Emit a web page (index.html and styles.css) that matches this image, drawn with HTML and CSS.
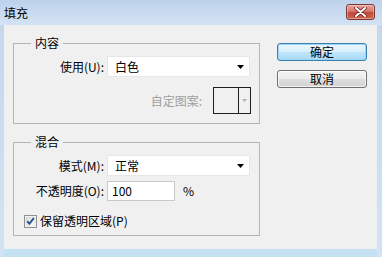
FILE: index.html
```html
<!DOCTYPE html>
<html lang="zh-CN">
<head>
<meta charset="utf-8">
<title>填充</title>
<link rel="stylesheet" href="styles.css">
</head>
<body>
<div class="window">
  <div class="titlebar">
    <span class="title">填充</span>
    <div class="close">
      <svg width="13" height="10" viewBox="0 0 13 10">
        <path d="M2 1 L11 9 M11 1 L2 9" stroke="#6b2020" stroke-width="3.6" stroke-linecap="round"/>
        <path d="M2 1 L11 9 M11 1 L2 9" stroke="#ffffff" stroke-width="2" stroke-linecap="round"/>
      </svg>
    </div>
  </div>
  <div class="client">
    <div class="main">
      <fieldset class="group g1">
        <legend>内容</legend>
        <div class="row">
          <span class="lbl">使用(U):</span>
          <div class="select"><span>白色</span>
            <svg class="arrow" width="7" height="4" viewBox="0 0 7 4"><path d="M0 0 H7 L3.5 4 Z" fill="#000"/></svg>
          </div>
        </div>
        <div class="row pattern-row">
          <span class="lbl-plain disabled">自定图案:</span>
          <div class="swatch">
            <div class="swatch-main"></div>
            <div class="swatch-arrow">
              <svg width="5" height="3" viewBox="0 0 5 3"><path d="M0 0 H5 L2.5 3 Z" fill="#b0b0b0"/></svg>
            </div>
          </div>
        </div>
      </fieldset>
      <fieldset class="group g2">
        <legend>混合</legend>
        <div class="row">
          <span class="lbl">模式(M):</span>
          <div class="select"><span>正常</span>
            <svg class="arrow" width="7" height="4" viewBox="0 0 7 4"><path d="M0 0 H7 L3.5 4 Z" fill="#000"/></svg>
          </div>
        </div>
        <div class="row opacity-row">
          <span class="lbl">不透明度(O):</span>
          <div class="input">100</div>
          <span class="pct">%</span>
        </div>
        <div class="row check-row">
          <svg class="checkbox" width="13" height="13" viewBox="0 0 13 13">
            <defs>
              <linearGradient id="cb" x1="0" y1="0" x2="1" y2="1">
                <stop offset="0" stop-color="#dcdcdc"/>
                <stop offset="1" stop-color="#ffffff"/>
              </linearGradient>
            </defs>
            <rect x="0.5" y="0.5" width="12" height="12" fill="#fff" stroke="#8e8f8f"/>
            <rect x="2" y="2" width="9" height="9" fill="url(#cb)" stroke="#c6c6c6" stroke-width="0.5"/>
            <path d="M3.2 6.2 L5.4 8.8 L9.8 3.2" fill="none" stroke="#2b4f91" stroke-width="1.9"/>
          </svg>
          <span class="check-lbl">保留透明区域(P)</span>
        </div>
      </fieldset>
    </div>
    <div class="buttons">
      <div class="btn btn-default">确定</div>
      <div class="btn">取消</div>
    </div>
  </div>
</div>
</body>
</html>
```

FILE: styles.css
```css
html, body {
  margin: 0;
  padding: 0;
  background: #cfe0f1;
}
body {
  font-family: "Noto Sans CJK SC", "Microsoft YaHei", sans-serif;
  font-size: 12px;
  color: #000;
}
.window {
  width: 382px;
  height: 257px;
  display: flex;
  flex-direction: column;
  background: linear-gradient(#c2d6ed, #d3e3f4);
  overflow: hidden;
}
.titlebar {
  height: 25px;
  flex: none;
  display: flex;
  align-items: flex-start;
  justify-content: space-between;
  background: linear-gradient(#bcd2eb, #d4e3f4);
}
.title {
  margin: 6px 0 0 4px;
  line-height: 14px;
  font-size: 12px;
  color: #000;
}
.close {
  margin: 4px 7px 0 0;
  width: 27px;
  height: 14px;
  border: 1px solid #7c3631;
  border-radius: 3px;
  background: linear-gradient(#e8a69d 0%, #d8776b 45%, #c1473a 55%, #d0674f 100%);
  display: flex;
  align-items: center;
  justify-content: center;
  box-shadow: inset 0 0 0 1px rgba(255,255,255,0.35);
}
.client {
  flex: 1;
  display: flex;
  align-items: flex-start;
  background: #f0f0f0;
  margin-left: 4px;
  margin-right: 5px;
  padding: 11px 10px 0 9px;
  border-bottom: 8px solid #c4e2f3;
  box-shadow: 0 1px 0 #e9f4fa;
}
.main {
  width: 247px;
  display: flex;
  flex-direction: column;
  gap: 11px;
}
.group {
  margin: 0;
  padding: 0;
  min-width: 0;
  border: 1px solid #b5b5b5;
}
.group legend {
  margin-left: 17px;
  padding: 0 4px;
  line-height: 14px;
  font-size: 12px;
}
.g1 {
  padding: 6px 0 9px 0;
}
.g2 {
  padding: 6px 0 6px 0;
}
.row {
  display: flex;
  align-items: center;
}
.lbl {
  width: 90px;
  margin-right: 3px;
  text-align: right;
  line-height: 14px;
  white-space: nowrap;
}
.lbl-plain {
  line-height: 14px;
  margin-right: 11px;
}
.disabled {
  color: #a0a0a0;
}
.select {
  width: 143px;
  height: 21px;
  box-sizing: border-box;
  background: #fff;
  border: 1px solid #e6e6e6;
  display: flex;
  align-items: center;
  justify-content: space-between;
  padding: 0 5px 0 7px;
  line-height: 14px;
}
.pattern-row {
  justify-content: flex-end;
  padding-right: 8px;
  margin-top: 10px;
}
.swatch {
  width: 38px;
  height: 27px;
  box-sizing: border-box;
  border: 1px solid #1e1e1e;
  display: flex;
  background: #f0f0f0;
}
.swatch-main {
  flex: 1;
  border-right: 1px solid #1e1e1e;
}
.swatch-arrow {
  width: 11px;
  display: flex;
  align-items: center;
  justify-content: center;
}
.opacity-row {
  margin-top: 5px;
}
.input {
  width: 68px;
  height: 20px;
  box-sizing: border-box;
  background: #fff;
  border: 1px solid #c9c9c9;
  padding: 0 4px;
  line-height: 18px;
}
.pct {
  margin-left: 8px;
  line-height: 14px;
}
.check-row {
  margin-top: 12px;
  padding-left: 10px;
  height: 16px;
}
.checkbox {
  flex: none;
}
.check-lbl {
  margin-left: 3px;
  line-height: 14px;
}
.buttons {
  margin-left: 17px;
  margin-top: 7px;
  display: flex;
  flex-direction: column;
  gap: 9px;
}
.btn {
  width: 90px;
  height: 18px;
  box-sizing: border-box;
  border: 1px solid #707070;
  border-radius: 3px;
  background: linear-gradient(#f4f4f4 0%, #ebebeb 48%, #dddddd 52%, #d3d3d3 100%);
  text-align: center;
  line-height: 16px;
  box-shadow: inset 0 0 0 1px rgba(255,255,255,0.7);
}
.btn-default {
  border-color: #3c7fb1;
  background: linear-gradient(#eaf6fd 0%, #d9f0fc 48%, #bee6fd 52%, #a7d9f5 100%);
  box-shadow: inset 0 0 0 1px #9ad6f4;
}
```
